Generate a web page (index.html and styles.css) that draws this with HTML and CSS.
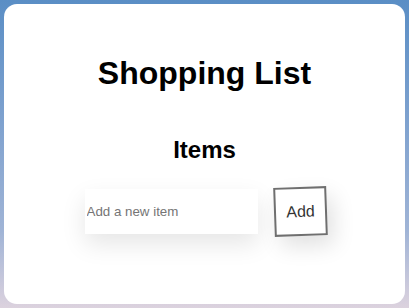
FILE: index.html
```html
<!DOCTYPE html>
<html>
<head>
<meta charset="utf-8">
<link rel="stylesheet" href="styles.css">
</head>
<body>
<div class="card">
  <h1 class="title">Shopping List</h1>
  <h2 class="subtitle">Items</h2>
  <div class="row">
    <input class="item-input" type="text" placeholder="Add a new item">
    <button class="add-btn">Add</button>
  </div>
</div>
</body>
</html>
```
FILE: styles.css
```css
html, body {
  margin: 0;
  height: 100%;
}
body {
  font-family: "Liberation Sans", Arial, sans-serif;
  background: linear-gradient(to bottom, #5a8ec5 0%, #7fa2cf 40%, #a0b4d6 75%, #dcd2de 100%);
  padding: 4px;
  box-sizing: border-box;
}
.card {
  background: #fff;
  border-radius: 13px;
  height: 300px;
  box-sizing: border-box;
  padding-top: 51px;
  display: flex;
  flex-direction: column;
  align-items: center;
}
.title {
  margin: 0;
  font-size: 32px;
  font-weight: bold;
  color: #000;
  line-height: 37px;
}
.subtitle {
  margin: 44px 0 0;
  font-size: 24px;
  font-weight: bold;
  color: #000;
  line-height: 28px;
}
.row {
  margin-top: 23px;
  display: flex;
  align-items: center;
  gap: 16px;
  margin-left: 2px;
}
.item-input {
  width: 173px;
  height: 45px;
  box-sizing: border-box;
  border: none;
  outline: none;
  padding: 0 2px;
  font-family: "Liberation Sans", Arial, sans-serif;
  font-size: 13.33px;
  background: #fff;
  box-shadow: 0 10px 25px rgba(0, 0, 0, 0.1);
}
.item-input::placeholder {
  color: #757575;
}
.add-btn {
  width: 53px;
  height: 49px;
  box-sizing: border-box;
  background: #fff;
  border: 2px solid #6f6f6f;
  font-family: "Liberation Sans", Arial, sans-serif;
  font-size: 16px;
  color: #333;
  transform: rotate(-2deg);
  box-shadow: 6px 10px 22px rgba(0, 0, 0, 0.12);
  padding: 0;
}
```
